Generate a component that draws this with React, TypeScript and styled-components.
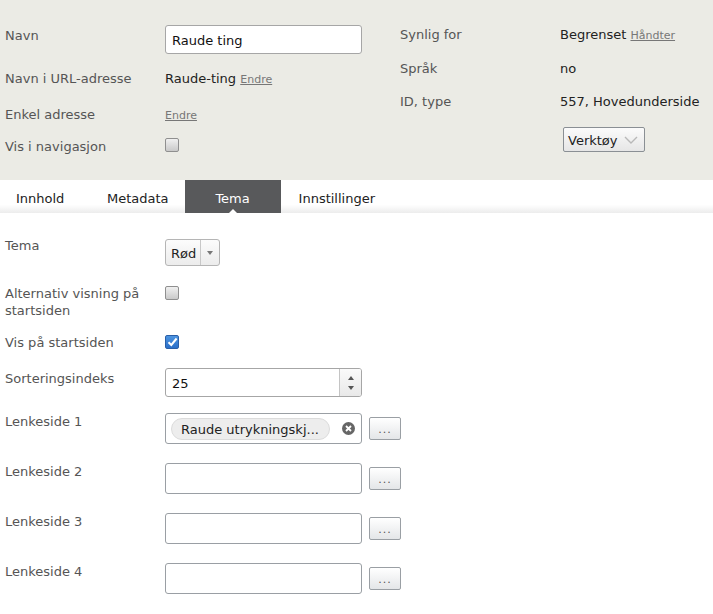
import React from 'react';
import styled, { createGlobalStyle, css } from 'styled-components';

const GlobalStyle = createGlobalStyle`
  html, body {
    margin: 0;
    padding: 0;
    background: #ffffff;
  }
  body {
    font-family: 'DejaVu Sans', Verdana, sans-serif;
    font-size: 13px;
    color: #222;
  }
`;

const Page = styled.div`
  width: 713px;
  min-height: 614px;
  overflow: hidden;
`;

const Header = styled.div`
  height: 180px;
  box-sizing: border-box;
  padding: 25px 0 0 5px;
  background: #ebebe5;
  display: grid;
  grid-template-columns: 395px 1fr;
`;

const HeaderGrid = styled.div<{ $rows: string; $valueCol: string }>`
  display: grid;
  grid-template-columns: ${(p) => p.$valueCol} 1fr;
  grid-template-rows: ${(p) => p.$rows};
  align-items: start;
`;

const Label = styled.div<{ $top?: number }>`
  color: #555;
  line-height: 17px;
  padding-top: 1px;
  margin-top: ${(p) => p.$top ?? 0}px;
  padding-right: 10px;
`;

const Value = styled.div<{ $top?: number }>`
  color: #222;
  line-height: 17px;
  padding-top: 1px;
  margin-top: ${(p) => p.$top ?? 0}px;
  white-space: nowrap;
`;

const SmallLink = styled.a`
  font-size: 11px;
  color: #777;
  text-decoration: underline;
`;

const TextInput = styled.div<{ $w?: number; $h?: number; $top?: number }>`
  box-sizing: border-box;
  width: ${(p) => p.$w ?? 197}px;
  height: ${(p) => p.$h ?? 29}px;
  margin-top: ${(p) => p.$top ?? 0}px;
  border: 1px solid #a6a6a6;
  border-radius: 3px;
  background: #fff;
  display: flex;
  align-items: center;
  padding: 1px 0 0 6px;
  color: #111;
  position: relative;
`;

const Checkbox = styled.div<{ $checked?: boolean; $top?: number }>`
  box-sizing: border-box;
  width: 14px;
  height: 14px;
  margin-top: ${(p) => p.$top ?? 0}px;
  border-radius: 2px;
  border: 1px solid #8f8f8f;
  background: linear-gradient(#f0f0f0, #c9c9c9);
  display: flex;
  align-items: center;
  justify-content: center;
  ${(p) =>
    p.$checked &&
    css`
      border-color: #2a5fa8;
      background: linear-gradient(#4d94e0, #2a6fc9);
    `}
`;

const ToolButton = styled.div`
  box-sizing: border-box;
  margin: 1px 0 0 3px;
  width: 82px;
  height: 25px;
  border: 1px solid #8a8f94;
  border-radius: 2px;
  background: linear-gradient(#fbfbfb, #e6e6e6);
  display: flex;
  align-items: center;
  justify-content: space-between;
  padding: 1px 6px 0 4px;
  color: #222;
`;

const TabBar = styled.div`
  height: 33px;
  display: flex;
  background: linear-gradient(#ffffff 0%, #ffffff 75%, #ececec 100%);
`;

const Tab = styled.div<{ $active?: boolean }>`
  box-sizing: border-box;
  min-width: 91px;
  padding: 3px 16px 0;
  display: flex;
  align-items: center;
  justify-content: flex-start;
  color: #222;
  position: relative;
  ${(p) =>
    p.$active &&
    css`
      min-width: 96px;
      margin-right: 2px;
      justify-content: center;
      background: #58595b;
      color: #fff;
      &::after {
        content: '';
        position: absolute;
        left: 50%;
        bottom: 0;
        margin-left: -4px;
        border-left: 4px solid transparent;
        border-right: 4px solid transparent;
        border-bottom: 4px solid #fff;
      }
    `}
`;

const Content = styled.div`
  padding: 23px 0 0 5px;
  display: grid;
  grid-template-columns: 160px 1fr;
  grid-template-rows: 48px 49px 35px 44px 50px 50px 50px auto;
  align-items: start;
`;

const Select = styled.div`
  box-sizing: border-box;
  margin-top: 3px;
  width: 55px;
  height: 27px;
  border: 1px solid #b5b5b5;
  border-radius: 3px;
  background: linear-gradient(#fcfcfc, #ececec);
  display: flex;
  align-items: stretch;
`;

const SelectText = styled.div`
  flex: 1;
  display: flex;
  align-items: center;
  padding: 1px 0 0 5px;
  border-right: 1px solid #c8c8c8;
`;

const SelectArrow = styled.div`
  width: 18px;
  display: flex;
  align-items: center;
  justify-content: center;
  &::before {
    content: '';
    border-left: 3.5px solid transparent;
    border-right: 3.5px solid transparent;
    border-top: 4px solid #777;
  }
`;

const Spinner = styled.div`
  position: absolute;
  right: 0;
  top: 0;
  bottom: 0;
  width: 21px;
  border-left: 1px solid #c4c4c4;
  background: linear-gradient(#fafafa, #e9e9e9);
  border-radius: 0 2px 2px 0;
  display: flex;
  flex-direction: column;
  align-items: center;
  justify-content: center;
  gap: 6px;
`;

const Tri = styled.span<{ $up?: boolean }>`
  width: 0;
  height: 0;
  border-left: 3.5px solid transparent;
  border-right: 3.5px solid transparent;
  ${(p) => (p.$up ? 'border-bottom: 4px solid #555;' : 'border-top: 4px solid #555;')}
`;

const PickerRow = styled.div`
  display: flex;
  align-items: flex-start;
  gap: 7px;
`;

const PickerBox = styled.div`
  box-sizing: border-box;
  width: 197px;
  height: 31px;
  margin-top: 1px;
  border: 1px solid #9a9fa4;
  border-radius: 3px;
  background: #fff;
  display: flex;
  align-items: center;
  padding: 0 5px;
`;

const Chip = styled.div`
  box-sizing: border-box;
  height: 22px;
  width: 159px;
  border: 1px solid #dcdcdc;
  border-radius: 11px;
  background: #ededed;
  display: flex;
  align-items: center;
  padding: 1px 0 0 9px;
  color: #222;
  white-space: nowrap;
`;

const ClearIcon = styled.span`
  margin-left: auto;
  margin-right: 1px;
  display: flex;
`;

const DotsButton = styled.div`
  box-sizing: border-box;
  margin-top: 5px;
  width: 32px;
  height: 23px;
  border: 1px solid #9a9fa4;
  border-radius: 2px;
  background: linear-gradient(#ffffff, #e4e6e8);
  color: #555;
  font-size: 11px;
  display: flex;
  align-items: flex-end;
  justify-content: center;
  padding-bottom: 3px;
  letter-spacing: 1px;
`;

const Chevron = () => (
  <svg width="14" height="8" viewBox="0 0 14 8">
    <path d="M1 1 L7 7 L13 1" fill="none" stroke="#b8b8b8" strokeWidth="1.4" />
  </svg>
);

const Check = () => (
  <svg width="11" height="10" viewBox="0 0 11 10">
    <path d="M1.5 5.2 L4.3 8 L9.6 1.5" fill="none" stroke="#fff" strokeWidth="2" />
  </svg>
);

const XCircle = () => (
  <svg width="13" height="13" viewBox="0 0 13 13">
    <circle cx="6.5" cy="6.5" r="6.5" fill="#666" />
    <path d="M4 4 L9 9 M9 4 L4 9" stroke="#fff" strokeWidth="1.8" />
  </svg>
);

const App = () => {
  return (
    <Page>
      <GlobalStyle />
      <Header>
        <HeaderGrid $valueCol="160px" $rows="44px 36px 32px auto">
          <Label $top={1}>Navn</Label>
          <TextInput>Raude ting</TextInput>
          <Label>Navn i URL-adresse</Label>
          <Value>
            Raude-ting <SmallLink>Endre</SmallLink>
          </Value>
          <Label>Enkel adresse</Label>
          <Value>
            <SmallLink>Endre</SmallLink>
          </Value>
          <Label>Vis i navigasjon</Label>
          <Checkbox $top={1} />
        </HeaderGrid>
        <HeaderGrid $valueCol="160px" $rows="34px 33px 34px auto">
          <Label>Synlig for</Label>
          <Value>
            Begrenset <SmallLink>Håndter</SmallLink>
          </Value>
          <Label>Språk</Label>
          <Value>no</Value>
          <Label>ID, type</Label>
          <Value>557, Hovedunderside</Value>
          <span />
          <ToolButton>
            Verktøy
            <Chevron />
          </ToolButton>
        </HeaderGrid>
      </Header>

      <TabBar>
        <Tab>Innhold</Tab>
        <Tab>Metadata</Tab>
        <Tab $active>Tema</Tab>
        <Tab>Innstillinger</Tab>
      </TabBar>

      <Content>
        <Label>Tema</Label>
        <Select>
          <SelectText>Rød</SelectText>
          <SelectArrow />
        </Select>

        <Label>
          Alternativ visning på
          <br />
          startsiden
        </Label>
        <Checkbox $top={2} />

        <Label>Vis på startsiden</Label>
        <Checkbox $checked $top={2}>
          <Check />
        </Checkbox>

        <Label $top={1}>Sorteringsindeks</Label>
        <TextInput>
          25
          <Spinner>
            <Tri $up />
            <Tri />
          </Spinner>
        </TextInput>

        {[1, 2, 3, 4].map((n) => (
          <React.Fragment key={n}>
            <Label>Lenkeside {n}</Label>
            <PickerRow>
              <PickerBox>
                {n === 1 && (
                  <>
                    <Chip>Raude utrykningskj...</Chip>
                    <ClearIcon>
                      <XCircle />
                    </ClearIcon>
                  </>
                )}
              </PickerBox>
              <DotsButton>...</DotsButton>
            </PickerRow>
          </React.Fragment>
        ))}
      </Content>
    </Page>
  );
};

export default App;
